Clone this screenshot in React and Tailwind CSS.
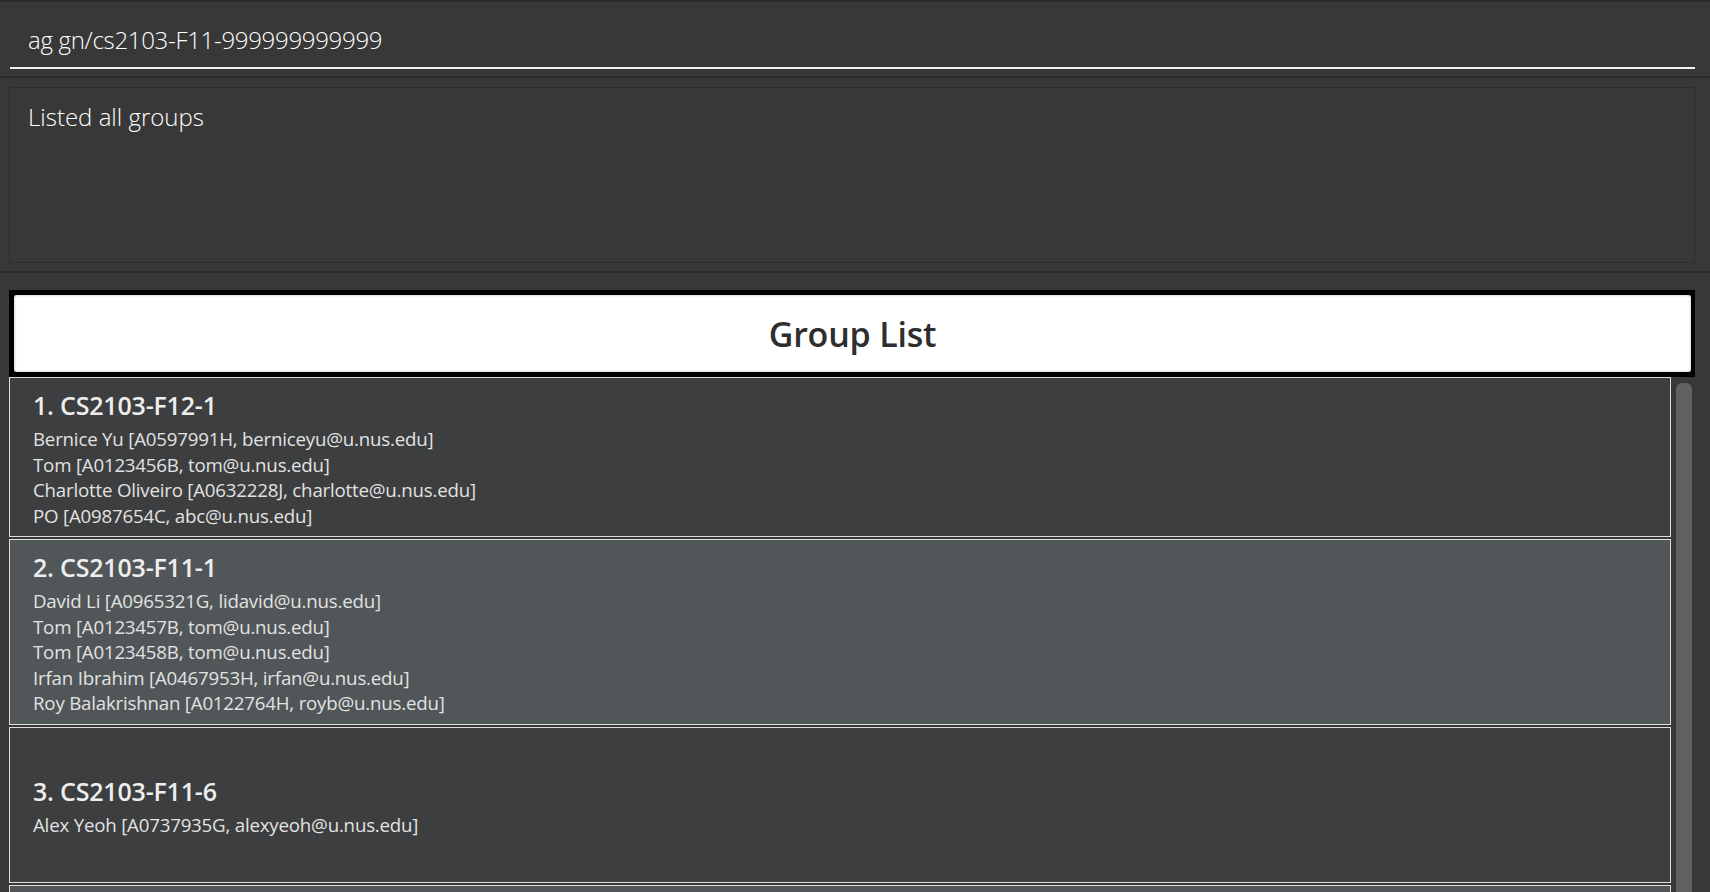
import React from "react";

const groups = [
  {
    name: "CS2103-F12-1",
    members: [
      "Bernice Yu [A0597991H, berniceyu@u.nus.edu]",
      "Tom [A0123456B, tom@u.nus.edu]",
      "Charlotte Oliveiro [A0632228J, charlotte@u.nus.edu]",
      "PO [A0987654C, abc@u.nus.edu]",
    ],
  },
  {
    name: "CS2103-F11-1",
    members: [
      "David Li [A0965321G, lidavid@u.nus.edu]",
      "Tom [A0123457B, tom@u.nus.edu]",
      "Tom [A0123458B, tom@u.nus.edu]",
      "Irfan Ibrahim [A0467953H, irfan@u.nus.edu]",
      "Roy Balakrishnan [A0122764H, royb@u.nus.edu]",
    ],
  },
  {
    name: "CS2103-F11-6",
    members: ["Alex Yeoh [A0737935G, alexyeoh@u.nus.edu]"],
  },
];

function GroupCard({ index, group }) {
  const even = index % 2 === 0;
  return (
    <div
      className={`mb-[2px] flex min-h-[156px] flex-col justify-center border border-[#dcdcdc] pt-[10px] pb-[8px] pl-[23px] ${
        even ? "bg-[#3c3e3f]" : "bg-[#515658]"
      }`}
    >
      <div className="mb-[4px] text-[25px] leading-[34px] font-semibold tracking-[-0.2px] text-[#eeeeee]">
        {index + 1}. {group.name}
      </div>
      {group.members.map((m, i) => (
        <div
          key={i}
          className="text-[18.7px] leading-[25.5px] tracking-[-0.2px] text-[#e2e2e2]"
        >
          {m}
        </div>
      ))}
    </div>
  );
}

export default function App() {
  return (
    <div
      className="flex h-[892px] w-full flex-col overflow-hidden border-t-2 border-[#2b2b2b] bg-[#383838]"
      style={{ fontFamily: '"Open Sans", "Noto Sans", sans-serif' }}
    >
      {/* command box */}
      <div className="h-[74px] shrink-0 pt-[22px] pl-[10px] pr-[15px]">
        <div className="border-b-2 border-[#f2f2f2] pb-[11px] pl-[18px] text-[24px] leading-[32px] font-light tracking-[-0.3px] text-white">
          ag gn/cs2103-F11-999999999999
        </div>
      </div>
      <div className="h-[2px] shrink-0 bg-[#2c2c2c]" />

      {/* result display */}
      <div className="h-[193px] shrink-0 pt-[9px] pl-[9px] pr-[15px] pb-[8px]">
        <div className="h-full border border-[#2d2d2d] pt-[12px] pl-[18px] text-[24px] leading-[34px] font-light text-white">
          Listed all groups
        </div>
      </div>
      <div className="h-[2px] shrink-0 bg-[#2c2c2c]" />

      {/* group list */}
      <div className="flex min-h-0 flex-1 flex-col pt-[17px] pl-[9px] pr-[15px]">
        <div className="shrink-0 border-[5px] border-r-4 border-black">
          <div className="flex h-[77px] items-center justify-center rounded-[3px] bg-white pt-[1px] text-[34px] font-semibold tracking-[-0.2px] text-[#2e2e2e] shadow-[inset_0_0_3px_rgba(0,0,0,0.25)]">
            Group List
          </div>
        </div>
        <div className="flex min-h-0 flex-1">
          <div className="flex-1 overflow-hidden">
            {groups.map((g, i) => (
              <GroupCard key={i} index={i} group={g} />
            ))}
            <div className="h-[40px] border border-[#dcdcdc] bg-[#515658]" />
          </div>
          <div className="w-[24px] shrink-0 pt-[6px] pl-[5px] pr-[3px]">
            <div className="h-[600px] rounded-[6px] bg-[#616161]" />
          </div>
        </div>
      </div>
    </div>
  );
}
